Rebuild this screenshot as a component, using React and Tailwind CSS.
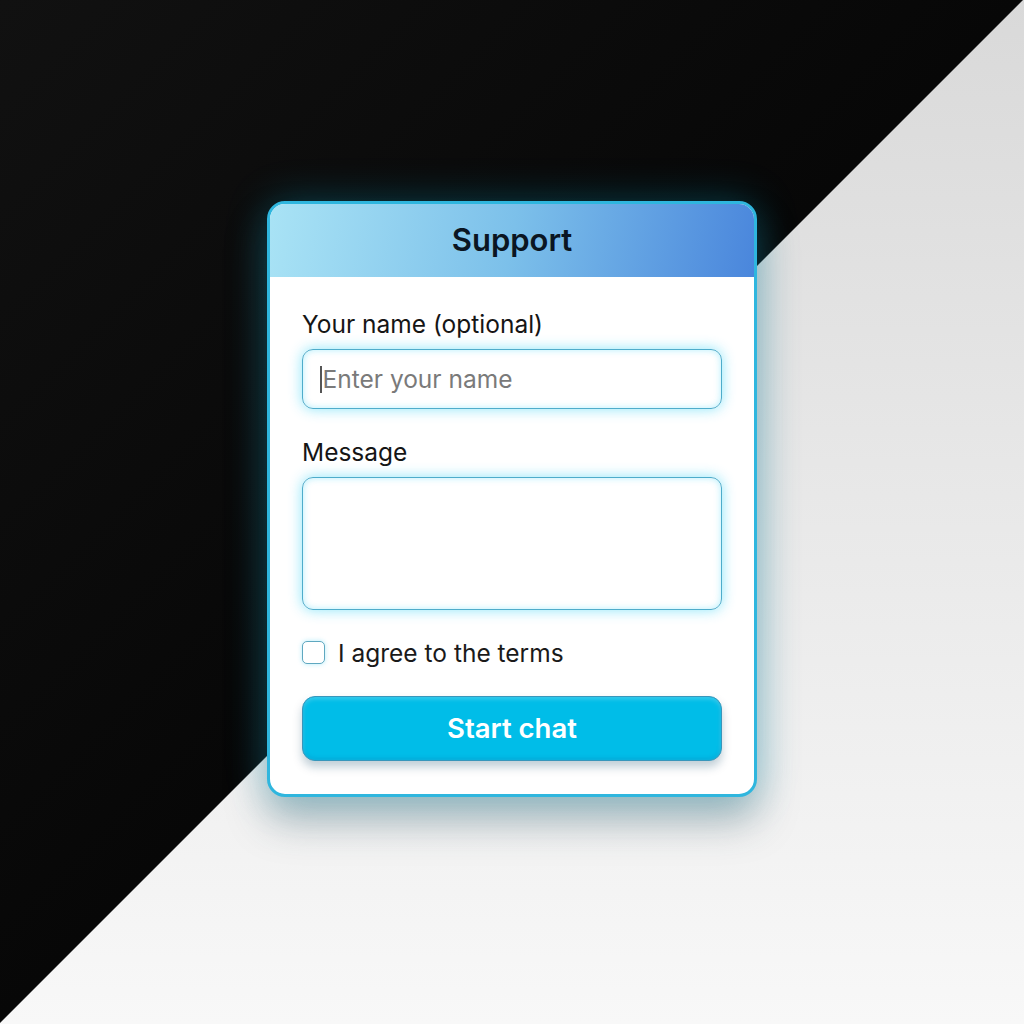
export default function App() {
  return (
    <div className="w-[1024px] h-[1024px] flex justify-center pt-[201px] font-['Inter',sans-serif] bg-[linear-gradient(to_bottom_right,#111111_0%,#070707_49.9%,transparent_50%),linear-gradient(to_bottom,#d9d9d9,#f8f8f8)]">
      <div className="w-[490px] h-[596px] rounded-[18px] border-[3px] border-[#2fb6de] bg-white overflow-hidden flex flex-col shadow-[0_0_40px_rgba(0,190,230,0.28),0_24px_40px_rgba(40,70,80,0.35)]">
        <div className="h-[73px] shrink-0 flex items-center justify-center bg-[linear-gradient(100deg,#a9e3f5_0%,#7cc0ea_50%,#4a86dc_100%)]">
          <span className="text-[31px] font-semibold text-[#0a1522]">Support</span>
        </div>
        <div className="flex flex-col px-[32px] pt-[32px]">
          <label className="text-[24.5px] leading-[30px] text-[#151515]">Your name (optional)</label>
          <div className="mt-[10px] h-[60px] rounded-[11px] border-[1.5px] border-[#4eaccb] flex items-center pl-[17px] shadow-[0_0_14px_rgba(0,200,245,0.45),inset_0_0_7px_rgba(0,200,245,0.3)]">
            <span className="w-[1.5px] h-[27px] bg-[#555] mr-[1px]"></span>
            <span className="text-[24.5px] leading-[30px] text-[#7a7a7a]">Enter your name</span>
          </div>
          <label className="mt-[28px] text-[24.5px] leading-[30px] text-[#151515]">Message</label>
          <div className="mt-[10px] h-[133px] rounded-[11px] border-[1.5px] border-[#4eaccb] shadow-[0_0_14px_rgba(0,200,245,0.45),inset_0_0_7px_rgba(0,200,245,0.3)]"></div>
          <div className="mt-[31px] h-[23px] flex items-center gap-[13px]">
            <span className="w-[23px] h-[23px] rounded-[5px] border-[1.5px] border-[#5fa8c0] bg-white shadow-[0_0_5px_rgba(0,190,240,0.3)]"></span>
            <span className="text-[24.5px] leading-[26px] text-[#1a1a1a]">I agree to the terms</span>
          </div>
          <button className="mt-[32px] h-[65px] rounded-[13px] bg-[#00bde8] border border-[#3896bb] flex items-center justify-center text-white text-[27.5px] font-semibold shadow-[0_6px_10px_rgba(0,60,90,0.25),inset_0_-2px_4px_rgba(0,100,160,0.2),inset_0_2px_4px_rgba(255,255,255,0.25)]">
            Start chat
          </button>
        </div>
      </div>
    </div>
  );
}
